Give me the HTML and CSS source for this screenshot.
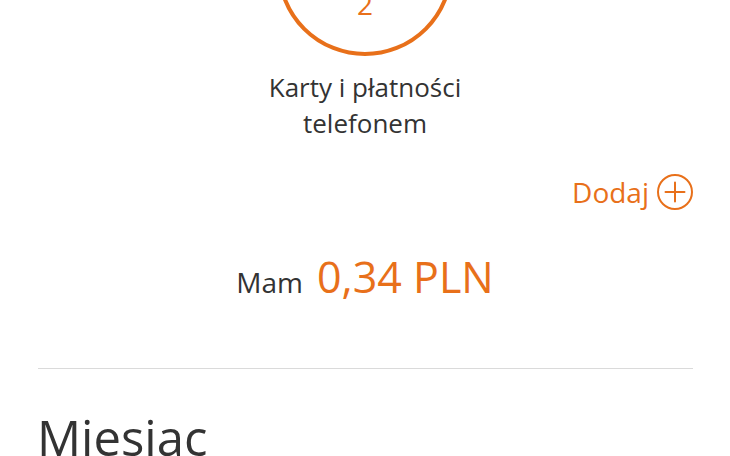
FILE: index.html
```html
<!DOCTYPE html>
<html lang="pl">
<head>
<meta charset="utf-8">
<link rel="stylesheet" href="styles.css">
</head>
<body>
<main class="page">
  <section class="hero">
    <div class="ring"><span class="ring-num">2</span></div>
    <p class="hero-label">Karty i płatności<br>telefonem</p>
  </section>
  <div class="add-row">
    <span class="add-text">Dodaj</span>
    <svg class="add-icon" width="36" height="36" viewBox="0 0 36 36" aria-hidden="true">
      <circle cx="18" cy="18" r="17" fill="none" stroke="#e8701a" stroke-width="2"/>
      <path d="M18 8.5v19M8.5 18h19" stroke="#e8701a" stroke-width="2" stroke-linecap="round"/>
    </svg>
  </div>
  <div class="balance">
    <span class="balance-label">Mam</span>
    <span class="balance-value">0,34 PLN</span>
  </div>
  <hr class="divider">
  <h2 class="section-title">Miesiąc</h2>
</main>
</body>
</html>
```
FILE: styles.css
```css
html, body {
  margin: 0;
  padding: 0;
  background: #ffffff;
}
body {
  font-family: "Open Sans", "Noto Sans", sans-serif;
  color: #333333;
  overflow: hidden;
}
.page {
  width: 730px;
  height: 456px;
  overflow: hidden;
}
.hero {
  display: flex;
  flex-direction: column;
  align-items: center;
}
.ring {
  box-sizing: border-box;
  width: 176px;
  height: 176px;
  margin-top: -120px;
  border: 4px solid #e8701a;
  border-radius: 50%;
  display: flex;
  flex-direction: column;
  justify-content: flex-end;
  align-items: center;
  padding-bottom: 34px;
}
.ring-num {
  font-size: 28px;
  line-height: 28px;
  color: #e8701a;
}
.hero-label {
  margin: 13px 0 0;
  font-size: 26px;
  line-height: 36px;
  text-align: center;
  color: #333333;
}
.add-row {
  display: flex;
  justify-content: flex-end;
  align-items: center;
  gap: 8px;
  margin-top: 33px;
  padding-right: 37px;
  height: 36px;
}
.add-text {
  font-size: 28px;
  line-height: 36px;
  color: #e8701a;
}
.add-icon {
  display: block;
}
.balance {
  display: flex;
  justify-content: center;
  align-items: baseline;
  gap: 14px;
  margin-top: 43px;
  height: 48px;
}
.balance-label {
  font-size: 28px;
  line-height: 48px;
  color: #333333;
}
.balance-value {
  font-size: 43px;
  line-height: 48px;
  color: #e8701a;
}
.divider {
  margin: 67px 37px 0 38px;
  border: 0;
  border-top: 1px solid #dadada;
  height: 0;
}
.section-title {
  margin: 38px 0 0 37px;
  font-size: 49px;
  line-height: 60px;
  font-weight: 400;
  color: #333333;
}
```
